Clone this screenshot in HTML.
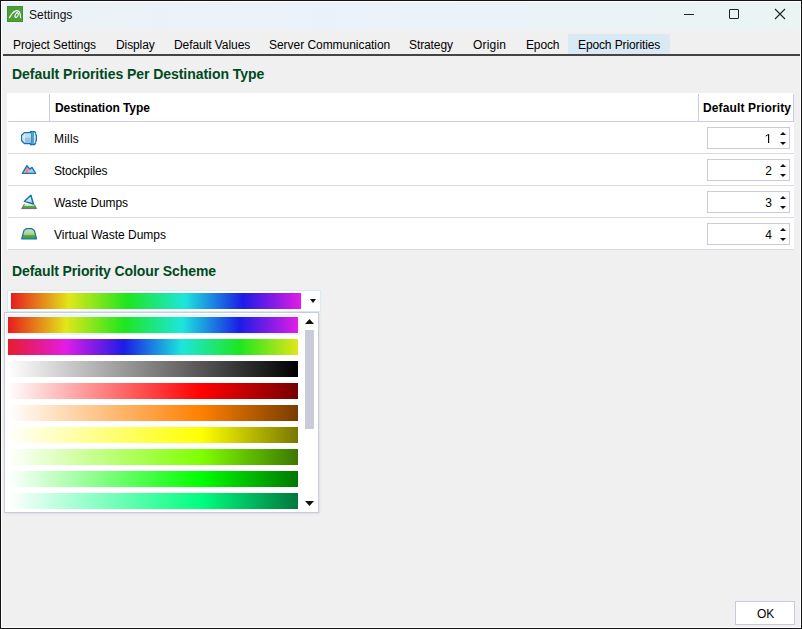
<!DOCTYPE html>
<html><head><meta charset="utf-8">
<style>
*{margin:0;padding:0;box-sizing:border-box}
html,body{width:802px;height:629px;overflow:hidden;background:#f0f0f0}
body{position:relative;font-family:"Liberation Sans",sans-serif;font-size:12px;color:#000}
.a{position:absolute}
.t{position:absolute;white-space:nowrap;line-height:14px}
#win{left:0;top:0;width:802px;height:629px;border:1px solid #141414}
#inner{left:1px;top:1px;width:800px;height:627px;border:1px solid #ffffff}
#title{left:2px;top:2px;width:798px;height:28px;background:linear-gradient(90deg,#ecf2f5 0%,#eaf2f9 40%,#e9f4f3 100%)}
.tab{top:38px;color:#000}
.h{color:#004a22;font-weight:bold;font-size:14px}
.hd{font-weight:bold;color:#000}
.row{left:8px;width:786px;height:1px;background:#dadada}
.spin{left:707px;width:83px;height:22px;border:1px solid #c9cbdf;background:#fff}
.num{left:0;width:64px;text-align:right;top:4px}
.bar{height:16px}
</style></head><body>
<div id="win" class="a"></div>
<div id="inner" class="a"></div>
<div id="title" class="a"></div>
<!-- app icon -->
<svg class="a" style="left:7px;top:6px" width="16" height="16" viewBox="0 0 16 16"><rect x="0" y="0" width="16" height="16" fill="#4e9d3c"/><rect x="0.5" y="0.5" width="15" height="15" fill="none" stroke="#3f9529" stroke-width="1"/>
<path d="M2.4,11.7C4.5,8 7,4.6 10,4.6C12.2,4.6 13.4,6.5 13.6,11.6" fill="none" stroke="#fff" stroke-width="1.2" stroke-linecap="round"/>
<path d="M10.6,6.2C9,7 7.6,9.5 8,11C8.5,12 10.6,11 11.2,9.2C11.6,8 11.3,7.2 10.8,7.2" fill="none" stroke="#fff" stroke-width="1.1" stroke-linecap="round"/></svg>
<div class="t" style="left:29px;top:8px;color:#111">Settings</div>
<!-- window controls -->
<div class="a" style="left:684px;top:14px;width:10px;height:1px;background:#222"></div>
<div class="a" style="left:729px;top:9px;width:10px;height:10px;border:1px solid #222;border-radius:1px"></div>
<svg class="a" style="left:774px;top:8px" width="12" height="12" viewBox="0 0 12 12"><path d="M1 1L11 11M11 1L1 11" stroke="#222" stroke-width="1.1" fill="none"/></svg>

<!-- tabs -->
<div class="a" style="left:568px;top:34px;width:102px;height:20px;background:#d9eaf4"></div>
<div class="t tab" style="left:13px;letter-spacing:-0.07px">Project Settings</div>
<div class="t tab" style="left:116px;letter-spacing:-0.1px">Display</div>
<div class="t tab" style="left:174px;letter-spacing:-0.07px">Default Values</div>
<div class="t tab" style="left:269px;letter-spacing:-0.04px">Server Communication</div>
<div class="t tab" style="left:409px;letter-spacing:-0.1px">Strategy</div>
<div class="t tab" style="left:473px;letter-spacing:0.2px">Origin</div>
<div class="t tab" style="left:526px;letter-spacing:-0.15px">Epoch</div>
<div class="t tab" style="left:578px;letter-spacing:-0.12px">Epoch Priorities</div>
<div class="a" style="left:3px;top:54px;width:797px;height:2px;background:#444"></div>

<!-- heading 1 -->
<div class="t h" style="left:12px;top:67px;letter-spacing:-0.05px">Default Priorities Per Destination Type</div>

<!-- table -->
<div class="a" style="left:7px;top:93px;width:787px;height:157px;background:#fff"></div>
<div class="a" style="left:49px;top:94px;width:1px;height:28px;background:#cccbdf"></div>
<div class="a" style="left:698px;top:94px;width:1px;height:28px;background:#cccbdf"></div>
<div class="a" style="left:793px;top:94px;width:1px;height:28px;background:#cccbdf"></div>
<div class="a" style="left:8px;top:121px;width:786px;height:1px;background:#cccbdf"></div>
<div class="t hd" style="left:55px;top:101px;letter-spacing:-0.06px">Destination Type</div>
<div class="t hd" style="left:703px;top:101px;letter-spacing:0.13px">Default Priority</div>

<div class="a row" style="top:153px"></div>
<div class="a row" style="top:185px"></div>
<div class="a row" style="top:217px"></div>
<div class="a row" style="top:249px"></div>

<!-- icons -->
<svg class="a" style="left:21px;top:130px" width="16" height="16" viewBox="0 0 16 16">
<defs><linearGradient id="mg" x1="0" y1="0" x2="0" y2="1"><stop offset="0" stop-color="#cfe6f1"/><stop offset="0.45" stop-color="#bcdbea"/><stop offset="0.5" stop-color="#97c5de"/><stop offset="1" stop-color="#8cbfdb"/></linearGradient></defs>
<path d="M0.5,5.5V10.5L3.5,13.5H9.5V14.5H13.5L14.5,13.5V11.5L15.5,10.5V5.5L14.5,4.5V2.5L13.5,1.5H9.5V2.5H3.5Z" fill="url(#mg)" stroke="#0f73b3" stroke-width="1.25"/>
<path d="M1.2,6 L4,3.2 V13 L1.2,10Z" fill="#d9ecf4" opacity="0.8"/>
<rect x="10" y="2" width="3" height="12" fill="#559fcd"/>
<rect x="10" y="2" width="0.8" height="12" fill="#3d8fc2"/>
<rect x="13" y="3" width="1.2" height="10" fill="#d3eaf4"/>
</svg>
<svg class="a" style="left:21px;top:163px" width="16" height="12" viewBox="0 0 16 12">
<defs><linearGradient id="sg" x1="0" y1="0" x2="1" y2="0"><stop offset="0" stop-color="#f6d3d3"/><stop offset="0.5" stop-color="#e78686"/><stop offset="1" stop-color="#f0b5b5"/></linearGradient></defs>
<path d="M8.6,5.9L11,4.3L14.5,10.2H5Z" fill="#a6cde4"/>
<path d="M1.6,10.2L5.9,2.6L9.6,7.2L7,10.2Z" fill="url(#sg)"/>
<path d="M1.4,10.3L5.9,2.6L8.8,6.1L11,4.4L14.6,10.3Z" fill="none" stroke="#1677b6" stroke-width="1.35" stroke-linejoin="round"/>
</svg>
<svg class="a" style="left:21px;top:194px" width="16" height="16" viewBox="0 0 16 16">
<defs><linearGradient id="wg" x1="0" y1="0" x2="0" y2="1"><stop offset="0" stop-color="#e6f3de"/><stop offset="0.38" stop-color="#c2e1ab"/><stop offset="0.52" stop-color="#5aae42"/><stop offset="1" stop-color="#3f9d2c"/></linearGradient>
<linearGradient id="tg" x1="0" y1="0" x2="1" y2="1"><stop offset="0.2" stop-color="#ffffff"/><stop offset="1" stop-color="#8dc1df"/></linearGradient></defs>
<path d="M3.6,9.9L0.6,14.6H15.5L13.3,10.4Z" fill="url(#wg)"/><path d="M3.6,9.9L0.6,14.6H15.5L13.3,10.4" fill="none" stroke="#6a6a6a" stroke-width="1"/>
<path d="M9.9,1.3L3.3,7.4L12.4,10Z" fill="url(#tg)" stroke="#0e6fae" stroke-width="1.4" stroke-linejoin="round"/>
</svg>
<svg class="a" style="left:21px;top:227px" width="16" height="13" viewBox="0 0 16 13">
<defs><linearGradient id="vg" x1="0" y1="0" x2="0" y2="1"><stop offset="0" stop-color="#c8e4b4"/><stop offset="0.55" stop-color="#a8d490"/><stop offset="0.7" stop-color="#52a83c"/><stop offset="1" stop-color="#3f9b2c"/></linearGradient></defs>
<path d="M0.7,11.8L2.9,3.6L5.6,1.6H10.6L13.4,3.6L15.5,11.8Z" fill="url(#vg)" stroke="#1672b0" stroke-width="1.25" stroke-linejoin="round"/>
</svg>
<div class="t" style="left:54px;top:132px;letter-spacing:0.2px">Mills</div>
<div class="t" style="left:54px;top:164px;letter-spacing:-0.13px">Stockpiles</div>
<div class="t" style="left:54px;top:196px;letter-spacing:-0.08px">Waste Dumps</div>
<div class="t" style="left:54px;top:228px">Virtual Waste Dumps</div>

<div class="a spin" style="top:127px"><svg class="a" style="left:57px;top:6px" width="6" height="9" viewBox="0 0 6 9"><path d="M3.6,0.2V9" stroke="#000" stroke-width="1.15" fill="none"/><path d="M3.5,0.4L0.6,2.1" stroke="#000" stroke-width="0.9" fill="none"/></svg></div>
<div class="a spin" style="top:159px"><div class="t num">2</div></div>
<div class="a spin" style="top:191px"><div class="t num">3</div></div>
<div class="a spin" style="top:223px"><div class="t num">4</div></div>

<svg class="a" style="left:780px;top:132px" width="6" height="3" viewBox="0 0 6 3"><path d="M0 3H6L3 0Z" fill="#111"/></svg>
<svg class="a" style="left:780px;top:142px" width="6" height="3" viewBox="0 0 6 3"><path d="M0 0H6L3 3Z" fill="#111"/></svg>
<svg class="a" style="left:780px;top:164px" width="6" height="3" viewBox="0 0 6 3"><path d="M0 3H6L3 0Z" fill="#111"/></svg>
<svg class="a" style="left:780px;top:174px" width="6" height="3" viewBox="0 0 6 3"><path d="M0 0H6L3 3Z" fill="#111"/></svg>
<svg class="a" style="left:780px;top:196px" width="6" height="3" viewBox="0 0 6 3"><path d="M0 3H6L3 0Z" fill="#111"/></svg>
<svg class="a" style="left:780px;top:206px" width="6" height="3" viewBox="0 0 6 3"><path d="M0 0H6L3 3Z" fill="#111"/></svg>
<svg class="a" style="left:780px;top:228px" width="6" height="3" viewBox="0 0 6 3"><path d="M0 3H6L3 0Z" fill="#111"/></svg>
<svg class="a" style="left:780px;top:238px" width="6" height="3" viewBox="0 0 6 3"><path d="M0 0H6L3 3Z" fill="#111"/></svg>

<!-- heading 2 -->
<div class="t h" style="left:12px;top:264px;letter-spacing:-0.1px">Default Priority Colour Scheme</div>

<!-- combo -->
<div class="a" style="left:7px;top:290px;width:314px;height:22px;background:#fff;border:1px solid #d8eaf3"></div>
<div class="a bar" style="left:11px;top:293px;width:290px;background:linear-gradient(90deg,#e81c1c,#e2e61a 20%,#1ee61e 40%,#1ce6dc 60%,#1c1ce6 80%,#e21ce6)"></div>
<svg class="a" style="left:310px;top:299px" width="6" height="4" viewBox="0 0 6 4"><path d="M0 0H6L3 4Z" fill="#111"/></svg>

<!-- popup -->
<div class="a" style="left:4px;top:312px;width:315px;height:201px;background:#fff;border:1px solid #c9cbdb;box-shadow:1px 1px 2px rgba(0,0,0,0.07)"></div>
<div class="a" style="left:6px;top:314px;width:294px;height:21px;background:#e8f6fa"></div>
<div class="a bar" style="left:8px;top:317px;width:290px;background:linear-gradient(90deg,#e81c1c,#e2e61a 20%,#1ee61e 40%,#1ce6dc 60%,#1c1ce6 80%,#e21ce6)"></div>
<div class="a bar" style="left:8px;top:339px;width:290px;background:linear-gradient(90deg,#e81c2a,#e21ce6 20%,#1c1ce6 40%,#1ce6dc 60%,#1ee61e 80%,#e2e61a)"></div>
<div class="a bar" style="left:8px;top:361px;width:290px;background:linear-gradient(90deg,#ffffff,#000000)"></div>
<div class="a bar" style="left:8px;top:383px;width:290px;background:linear-gradient(90deg,#ffffff,#ff0000 66.7%,#780000)"></div>
<div class="a bar" style="left:8px;top:405px;width:290px;background:linear-gradient(90deg,#ffffff,#ff8000 66.7%,#783c00)"></div>
<div class="a bar" style="left:8px;top:427px;width:290px;background:linear-gradient(90deg,#ffffff,#ffff00 66.7%,#787800)"></div>
<div class="a bar" style="left:8px;top:449px;width:290px;background:linear-gradient(90deg,#ffffff,#80ff00 66.7%,#3c7800)"></div>
<div class="a bar" style="left:8px;top:471px;width:290px;background:linear-gradient(90deg,#ffffff,#00ff00 66.7%,#007800)"></div>
<div class="a bar" style="left:8px;top:493px;width:290px;background:linear-gradient(90deg,#ffffff,#00ff80 66.7%,#00783c)"></div>
<svg class="a" style="left:305px;top:319px" width="9" height="5" viewBox="0 0 9 5"><path d="M0 5H9L4.5 0Z" fill="#111"/></svg>
<div class="a" style="left:305px;top:330px;width:9px;height:99px;background:#c9cbd9"></div>
<svg class="a" style="left:305px;top:501px" width="9" height="5" viewBox="0 0 9 5"><path d="M0 0H9L4.5 5Z" fill="#111"/></svg>

<!-- OK -->
<div class="a" style="left:735px;top:601px;width:60px;height:24px;background:#fff;border:1px solid #c9cadf"></div>
<div class="t" style="left:757px;top:607px">OK</div>
</body></html>
